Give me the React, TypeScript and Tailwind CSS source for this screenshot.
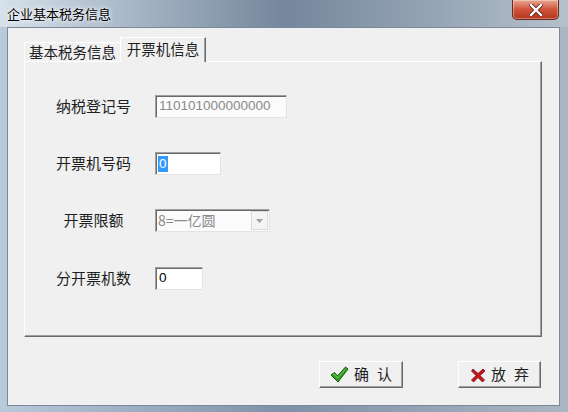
import React from "react";

// Win7 style "企业基本税务信息" dialog

const cjk = "font-['Noto_Sans_CJK_SC','Noto_Sans',sans-serif]";
const num = "font-['Liberation_Sans','DejaVu_Sans',sans-serif]";

function CloseButton() {
  return (
    <div className="w-[47px] h-[20px] rounded-b-[5px] border border-t-0 border-[#6b2a20] bg-gradient-to-b from-[#e8a593] via-[#d0533a] to-[#b4341c] shadow-[inset_0_0_0_1px_rgba(255,255,255,0.35)] flex items-center justify-center">
      <svg width="14" height="12" viewBox="0 0 14 12">
        <path
          d="M2 1 L12 11 M12 1 L2 11"
          stroke="#5a2418"
          strokeWidth="4"
          strokeLinecap="square"
        />
        <path
          d="M2 1 L12 11 M12 1 L2 11"
          stroke="#ffffff"
          strokeWidth="2.4"
          strokeLinecap="square"
        />
      </svg>
    </div>
  );
}

function CheckIcon() {
  return (
    <svg width="19" height="17" viewBox="0 0 19 17">
      <path
        d="M1 9 L4.5 6.5 L7.5 10 L15.5 1 L18 3 L8 16 Z"
        fill="#2fa11f"
        stroke="#1a5512"
        strokeWidth="1"
        strokeLinejoin="round"
      />
      <path d="M3 9 L4.5 8 L7.5 12 L16 2.5" stroke="#7bd46a" strokeWidth="0.8" fill="none" />
    </svg>
  );
}

function CrossIcon() {
  return (
    <svg width="16" height="16" viewBox="0 0 16 16">
      <path
        d="M3 2 L8 6.5 L13 2 L15 4 L10 8.5 L14.5 13 L12.5 15 L8 10.5 L3.5 15 L1.5 13 L6 8.5 L1.5 4 Z"
        fill="#c4141a"
        stroke="#7a0a0c"
        strokeWidth="0.8"
        strokeLinejoin="round"
      />
    </svg>
  );
}

const sunken =
  "border border-t-[#a0a0a0] border-l-[#a0a0a0] border-r-[#e3e3e3] border-b-[#e3e3e3] shadow-[inset_1px_1px_0_#696969]";

function Row({
  label,
  top,
  children,
}: {
  label: string;
  top: string;
  children: React.ReactNode;
}) {
  return (
    <div className={`flex items-center h-[23px] ${top}`}>
      <div className={`w-[77px] text-center text-[15px] text-[#1e1e1e] ${cjk}`}>
        {label}
      </div>
      <div className="ml-[23px] flex items-center">{children}</div>
    </div>
  );
}

function DlgButton({
  icon,
  text,
  width,
}: {
  icon: React.ReactNode;
  text: string;
  width: string;
}) {
  return (
    <button
      className={`${width} h-[27px] flex items-center justify-center gap-[5px] bg-[#f0f0f0] border border-t-white border-l-white border-r-[#696969] border-b-[#696969] shadow-[inset_-1px_-1px_0_#a0a0a0] text-[15px] text-[#1e1e1e] ${cjk}`}
    >
      {icon}
      <span className="tracking-[8px] -mr-[8px]">{text}</span>
    </button>
  );
}

export default function App() {
  return (
    <div className="w-[568px] h-[412px] flex flex-col bg-gradient-to-r from-[#b9cadb] via-[#7e91a6] to-[#aab6c3]">
      {/* title bar */}
      <div className="h-[27px] flex items-start justify-between pl-[7px] pr-[9px] bg-gradient-to-r from-[#d6e1eb] via-[#74879c] to-[#b5c0cb]">
        <span
          className={`mt-[4px] text-[13px] text-black ${cjk} [text-shadow:0_0_6px_#ffffff,0_0_3px_#ffffff]`}
        >
          企业基本税务信息
        </span>
        <CloseButton />
      </div>

      {/* client area */}
      <div className="flex-1 ml-[7px] mr-[8px] mb-[6px] border border-[#7a8a9c] bg-[#f0f0f0] flex flex-col">
        {/* tabs */}
        <div className="flex items-end pl-[16px] pt-[8px] h-[33px]">
          <div
            className={`h-[19px] w-[96px] flex items-end justify-center border-t border-l border-white text-[14.5px] leading-[18px] text-[#1e1e1e] ${cjk}`}
          >
            基本税务信息
          </div>
          <div
            className={`relative z-10 h-[25px] -mb-[1px] w-[86px] flex items-start justify-center pt-[2px] bg-[#f0f0f0] border-t border-l border-white border-r border-r-[#696969] shadow-[inset_-1px_0_0_#a0a0a0] text-[14.5px] leading-[18px] text-[#1e1e1e] ${cjk}`}
          >
            开票机信息
          </div>
        </div>

        {/* panel */}
        <div className="ml-[16px] w-[518px] h-[276px] border border-t-white border-l-white border-r-[#696969] border-b-[#696969] shadow-[inset_-1px_-1px_0_#a0a0a0] flex flex-col pl-[30px]">
          <Row label="纳税登记号" top="mt-[33px]">
            <div
              className={`w-[132px] h-[23px] bg-[#fbfbfb] ${sunken} flex items-center pl-[3px] text-[13.5px] text-[#8a8a8a] ${num}`}
            >
              110101000000000
            </div>
          </Row>
          <Row label="开票机号码" top="mt-[34px]">
            <div
              className={`w-[66px] h-[23px] bg-white ${sunken} flex items-center pl-[2px] text-[13.5px] ${num}`}
            >
              <span className="bg-[#3399ff] text-white px-[1px] leading-[16px]">0</span>
            </div>
          </Row>
          <Row label="开票限额" top="mt-[34px]">
            <div
              className={`w-[115px] h-[23px] bg-[#fbfbfb] ${sunken} flex items-center justify-between pl-[2px] pr-[1px]`}
            >
              <span className={`text-[14px] text-[#8a8a8a] ${cjk}`}>8=一亿圆</span>
              <div className="w-[17px] h-[19px] border border-[#dadada] bg-[#f4f4f4] flex items-center justify-center">
                <svg width="7" height="4" viewBox="0 0 7 4">
                  <path d="M0 0 L7 0 L3.5 4 Z" fill="#a0a0a0" />
                </svg>
              </div>
            </div>
          </Row>
          <Row label="分开票机数" top="mt-[35px]">
            <div
              className={`w-[48px] h-[23px] bg-white ${sunken} flex items-center pl-[3px] text-[13.5px] text-black ${num}`}
            >
              0
            </div>
          </Row>
        </div>

        {/* buttons */}
        <div className="flex justify-end gap-[55px] pr-[18px] mt-[24px]">
          <DlgButton icon={<CheckIcon />} text="确认" width="w-[84px]" />
          <DlgButton icon={<CrossIcon />} text="放弃" width="w-[83px]" />
        </div>
      </div>
    </div>
  );
}
